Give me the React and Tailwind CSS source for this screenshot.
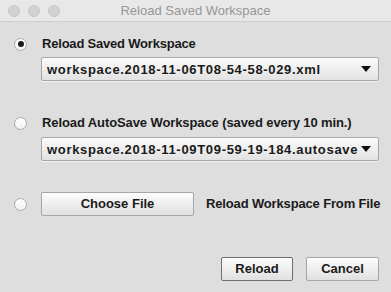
const font = { fontFamily: '"Liberation Sans", Arial, sans-serif' };

function Radio({ checked }) {
  return (
    <div className="w-[13px] h-[13px] rounded-full border border-[#a9a9a9] bg-gradient-to-b from-[#ffffff] to-[#f0f0f0] flex items-center justify-center shrink-0">
      {checked && <div className="w-[6px] h-[6px] rounded-full bg-[#1a1a1a]" />}
    </div>
  );
}

function Dropdown({ value }) {
  return (
    <div className="ml-[27px] w-[338px] h-[24px] flex items-center justify-between pl-[5px] pr-[7px] border border-[#a6a6a6] rounded-[2px] bg-gradient-to-b from-[#fbfbfb] to-[#e2e2e2] shadow-[0_1px_0_#f2f2f2]">
      <span className="text-[13px] font-bold text-[#1a1a1a] leading-none tracking-[0.68px]">{value}</span>
      <svg width="10" height="6" viewBox="0 0 10 6">
        <path d="M0 0 L10 0 L5 6 Z" fill="#111" />
      </svg>
    </div>
  );
}

function Button({ children, width, primary }) {
  return (
    <div
      className={`h-[24px] flex items-center justify-center rounded-[2px] bg-gradient-to-b from-[#fdfdfd] to-[#e0e0e0] text-[13px] font-bold text-[#1a1a1a] ${
        primary ? 'border border-[#6e6e6e]' : 'border border-[#a6a6a6]'
      } ${width}`}
    >
      {children}
    </div>
  );
}

export default function App() {
  return (
    <div className="w-[391px] h-[292px] bg-[#dedede] overflow-hidden" style={font}>
      <div className="h-[22px] bg-[#e8e8e8] border-b border-[#cfcfcf] relative flex items-center justify-center">
        <div className="absolute left-[8px] top-[5px] flex gap-[8px]">
          <div className="w-[12px] h-[12px] rounded-full bg-[#d2d2d2] border border-[#c6c6c6]" />
          <div className="w-[12px] h-[12px] rounded-full bg-[#d2d2d2] border border-[#c6c6c6]" />
          <div className="w-[12px] h-[12px] rounded-full bg-[#d2d2d2] border border-[#c6c6c6]" />
        </div>
        <span className="text-[13px] text-[#969696]">Reload Saved Workspace</span>
      </div>

      <div className="pl-[14px]">
        <div className="mt-[14px] h-[16px] flex items-center">
          <Radio checked />
          <span className="ml-[15px] text-[13px] font-bold text-[#1a1a1a] tracking-[-0.2px]">Reload Saved Workspace</span>
        </div>
        <div className="mt-[5px]">
          <Dropdown value="workspace.2018-11-06T08-54-58-029.xml" />
        </div>

        <div className="mt-[34px] h-[16px] flex items-center">
          <Radio />
          <span className="ml-[15px] text-[13px] font-bold text-[#1a1a1a] tracking-[-0.1px]">
            Reload AutoSave Workspace (saved every 10 min.)
          </span>
        </div>
        <div className="mt-[6px]">
          <Dropdown value="workspace.2018-11-09T09-59-19-184.autosave" />
        </div>

        <div className="mt-[31px] flex items-center">
          <Radio />
          <div className="ml-[14px]">
            <Button width="w-[153px]">Choose File</Button>
          </div>
          <span className="ml-[12px] text-[13px] font-bold text-[#1a1a1a] tracking-[-0.15px]">Reload Workspace From File</span>
        </div>

        <div className="mt-[41px] flex justify-end pr-[12px] gap-[13px]">
          <Button width="w-[72px]" primary>
            Reload
          </Button>
          <Button width="w-[73px]">Cancel</Button>
        </div>
      </div>
    </div>
  );
}
